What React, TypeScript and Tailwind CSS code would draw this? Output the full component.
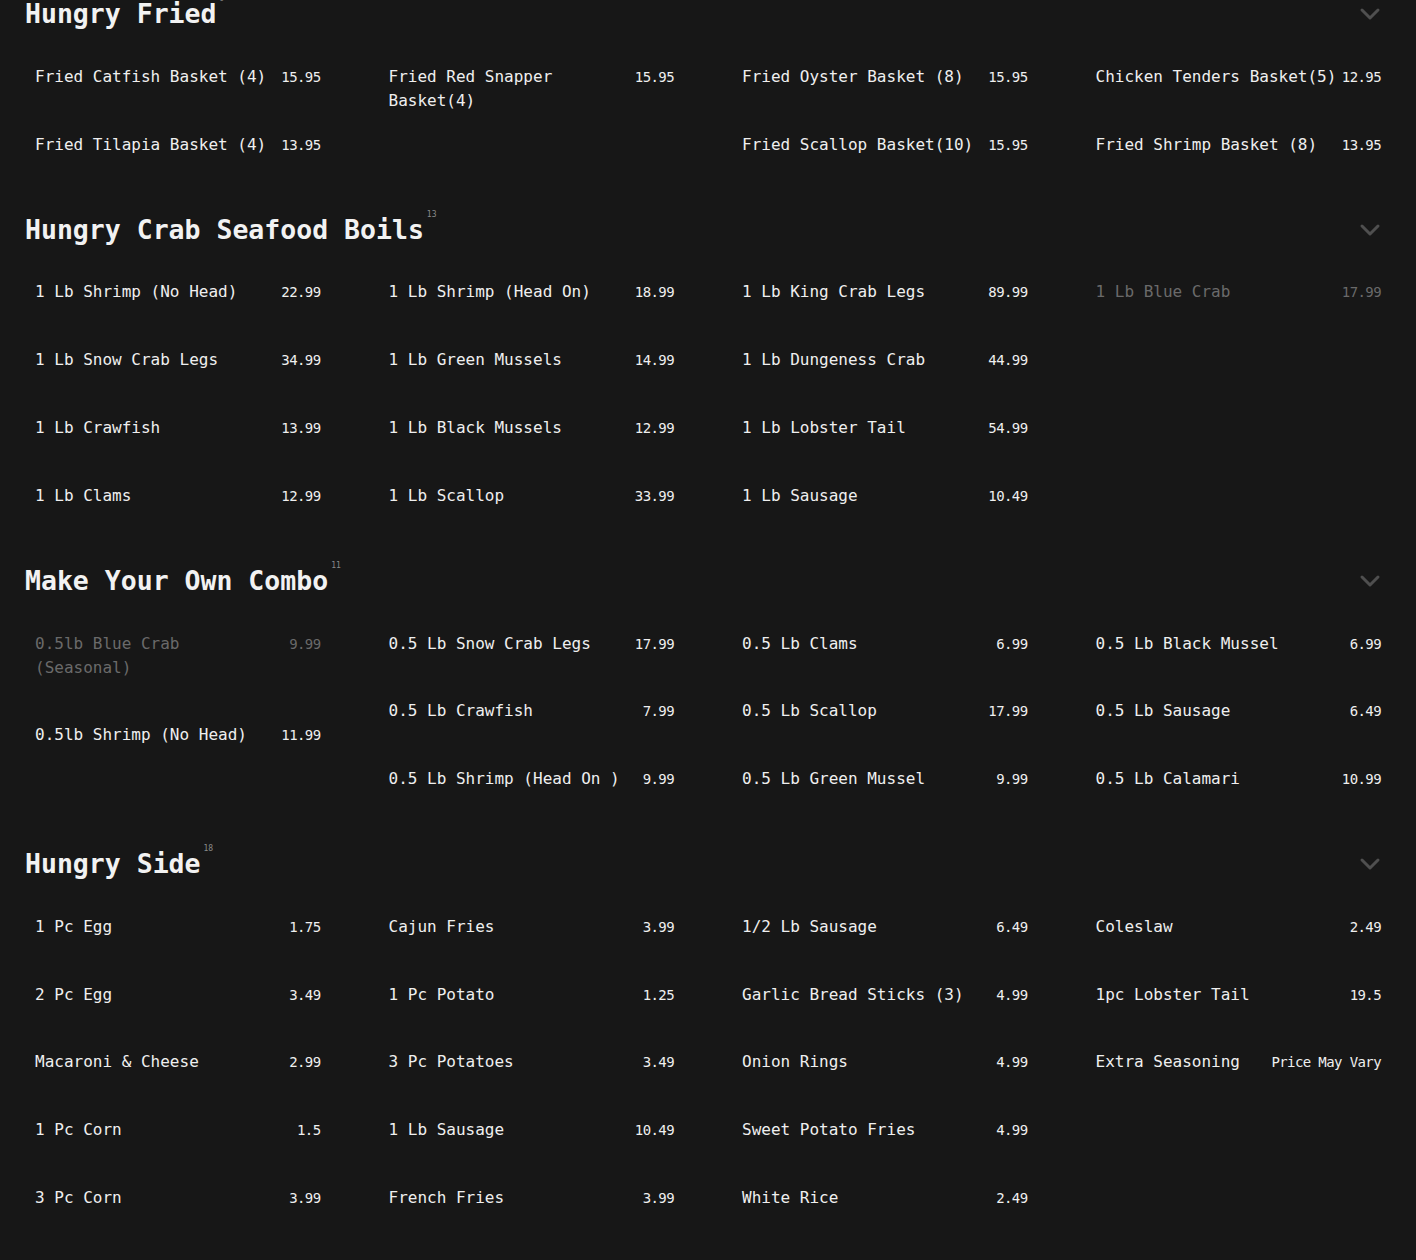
type Item = { name: string; price: string; off?: boolean };

interface Section {
  title: string;
  count: string;
  columns: Item[][];
}

const sections: Section[] = [
  {
    title: 'Hungry Fried',
    count: '9',
    columns: [
      [
        { name: 'Fried Catfish Basket (4)', price: '15.95' },
        { name: 'Fried Tilapia Basket (4)', price: '13.95' },
      ],
      [{ name: 'Fried Red Snapper Basket(4)', price: '15.95' }],
      [
        { name: 'Fried Oyster Basket (8)', price: '15.95' },
        { name: 'Fried Scallop Basket(10)', price: '15.95' },
      ],
      [
        { name: 'Chicken Tenders Basket(5)', price: '12.95' },
        { name: 'Fried Shrimp Basket (8)', price: '13.95' },
      ],
    ],
  },
  {
    title: 'Hungry Crab Seafood Boils',
    count: '13',
    columns: [
      [
        { name: '1 Lb Shrimp (No Head)', price: '22.99' },
        { name: '1 Lb Snow Crab Legs', price: '34.99' },
        { name: '1 Lb Crawfish', price: '13.99' },
        { name: '1 Lb Clams', price: '12.99' },
      ],
      [
        { name: '1 Lb Shrimp (Head On)', price: '18.99' },
        { name: '1 Lb Green Mussels', price: '14.99' },
        { name: '1 Lb Black Mussels', price: '12.99' },
        { name: '1 Lb Scallop', price: '33.99' },
      ],
      [
        { name: '1 Lb King Crab Legs', price: '89.99' },
        { name: '1 Lb Dungeness Crab', price: '44.99' },
        { name: '1 Lb Lobster Tail', price: '54.99' },
        { name: '1 Lb Sausage', price: '10.49' },
      ],
      [{ name: '1 Lb Blue Crab', price: '17.99', off: true }],
    ],
  },
  {
    title: 'Make Your Own Combo',
    count: '11',
    columns: [
      [
        { name: '0.5lb Blue Crab\n(Seasonal)', price: '9.99', off: true },
        { name: '0.5lb Shrimp (No Head)', price: '11.99' },
      ],
      [
        { name: '0.5 Lb Snow Crab Legs', price: '17.99' },
        { name: '0.5 Lb Crawfish', price: '7.99' },
        { name: '0.5 Lb Shrimp (Head On )', price: '9.99' },
      ],
      [
        { name: '0.5 Lb Clams', price: '6.99' },
        { name: '0.5 Lb Scallop', price: '17.99' },
        { name: '0.5 Lb Green Mussel', price: '9.99' },
      ],
      [
        { name: '0.5 Lb Black Mussel', price: '6.99' },
        { name: '0.5 Lb Sausage', price: '6.49' },
        { name: '0.5 Lb Calamari', price: '10.99' },
      ],
    ],
  },
  {
    title: 'Hungry Side',
    count: '18',
    columns: [
      [
        { name: '1 Pc Egg', price: '1.75' },
        { name: '2 Pc Egg', price: '3.49' },
        { name: 'Macaroni & Cheese', price: '2.99' },
        { name: '1 Pc Corn', price: '1.5' },
        { name: '3 Pc Corn', price: '3.99' },
      ],
      [
        { name: 'Cajun Fries', price: '3.99' },
        { name: '1 Pc Potato', price: '1.25' },
        { name: '3 Pc Potatoes', price: '3.49' },
        { name: '1 Lb Sausage', price: '10.49' },
        { name: 'French Fries', price: '3.99' },
      ],
      [
        { name: '1/2 Lb Sausage', price: '6.49' },
        { name: 'Garlic Bread Sticks (3)', price: '4.99' },
        { name: 'Onion Rings', price: '4.99' },
        { name: 'Sweet Potato Fries', price: '4.99' },
        { name: 'White Rice', price: '2.49' },
      ],
      [
        { name: 'Coleslaw', price: '2.49' },
        { name: '1pc Lobster Tail', price: '19.5' },
        { name: 'Extra Seasoning', price: 'Price May Vary' },
      ],
    ],
  },
];

function Chevron() {
  return (
    <svg width="22" height="14" viewBox="0 0 22 14" fill="none" className="mr-[10px]">
      <path d="M3 3 L11 11 L19 3" stroke="#4f4f4f" strokeWidth="3" strokeLinecap="round" strokeLinejoin="round" />
    </svg>
  );
}

function MenuItem({ item }: { item: Item }) {
  return (
    <div
      className={`flex items-start justify-between gap-[4px] px-[10px] py-[21.9px] ${
        item.off ? 'text-[#6a6a6a]' : 'text-[#efefef]'
      }`}
    >
      <span className="min-w-0 whitespace-pre-line text-[16px] leading-[24px]">{item.name}</span>
      <span className="shrink-0 whitespace-nowrap text-right text-[14px] leading-[24px] tracking-[-0.6px]">
        {item.price}
      </span>
    </div>
  );
}

export default function App() {
  return (
    <div className="min-h-[1260px] w-full overflow-hidden bg-[#171717] font-['DejaVu_Sans_Mono',monospace]">
      <div className="-mt-[37px] px-[25px]">
        {sections.map((s) => (
          <section key={s.title} className="pt-[33px]">
            <div className="flex h-[36px] items-center justify-between">
              <div className="flex items-start">
                <h2 className="text-[26.5px] font-bold leading-[36px] text-[#f2f2f2]">{s.title}</h2>
                <span className="ml-[3px] -mt-[1px] text-[8px] leading-none text-[#8a8a8a]">{s.count}</span>
              </div>
              <Chevron />
            </div>
            <div className="mt-[11px] grid grid-cols-4 items-start gap-x-[48px]">
              {s.columns.map((col, i) => (
                <div key={i} className="flex flex-col">
                  {col.map((item) => (
                    <MenuItem key={item.name} item={item} />
                  ))}
                </div>
              ))}
            </div>
          </section>
        ))}
      </div>
    </div>
  );
}
